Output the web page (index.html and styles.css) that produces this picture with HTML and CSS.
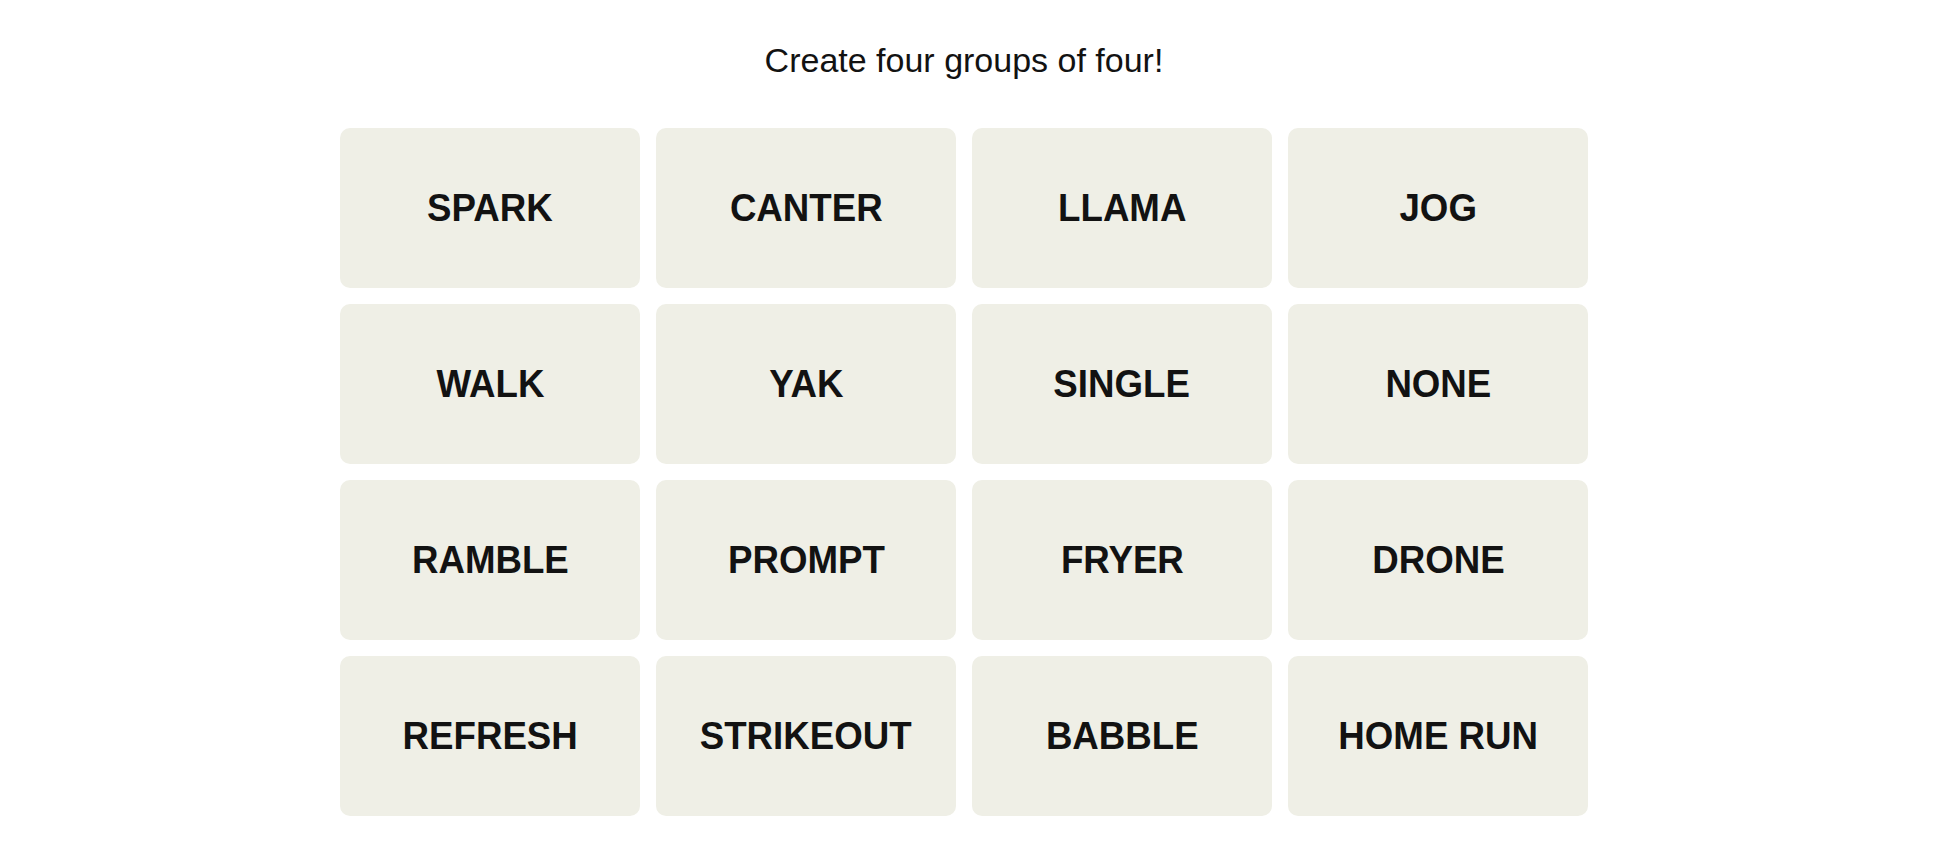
FILE: index.html
```html
<!DOCTYPE html>
<html lang="en">
<head>
    <meta charset="utf-8">
    <meta name="viewport" content="width=device-width, initial-scale=1">
    <title>Connections</title>
    <link rel="stylesheet" href="styles.css">
</head>
<body>
    <div class="game">
        <p class="prompt">Create four groups of four!</p>
        <div class="board">
            <button class="tile"><span>SPARK</span></button>
            <button class="tile"><span>CANTER</span></button>
            <button class="tile"><span>LLAMA</span></button>
            <button class="tile"><span>JOG</span></button>
            <button class="tile"><span>WALK</span></button>
            <button class="tile"><span>YAK</span></button>
            <button class="tile"><span>SINGLE</span></button>
            <button class="tile"><span>NONE</span></button>
            <button class="tile"><span>RAMBLE</span></button>
            <button class="tile"><span>PROMPT</span></button>
            <button class="tile"><span>FRYER</span></button>
            <button class="tile"><span>DRONE</span></button>
            <button class="tile"><span>REFRESH</span></button>
            <button class="tile"><span>STRIKEOUT</span></button>
            <button class="tile"><span>BABBLE</span></button>
            <button class="tile"><span>HOME RUN</span></button>
        </div>
    </div>
</body>
</html>
```

FILE: styles.css
```css
body {
    margin: 0;
    padding: 0 12px 0 0;
    font-family: 'Liberation Sans', Arial, sans-serif;
    color: #121212;
    background: #fff;
}
.game {
    width: 1248px;
    margin: 0 auto;
    padding-top: 41px;
}
.prompt {
    margin: 0 0 49px;
    font-size: 34px;
    line-height: 38px;
    text-align: center;
}
.board {
    display: grid;
    grid-template-columns: repeat(4, 300px);
    grid-auto-rows: 160px;
    gap: 16px;
}
.tile {
    display: flex;
    align-items: center;
    justify-content: center;
    padding: 0;
    border: none;
    border-radius: 10px;
    background-color: #efefe6;
    color: #121212;
    font-family: inherit;
    font-size: 39px;
    font-weight: 700;
    text-transform: uppercase;
    cursor: pointer;
}
.tile span {
    display: inline-block;
    transform: scaleX(0.94);
    white-space: nowrap;
}
```
